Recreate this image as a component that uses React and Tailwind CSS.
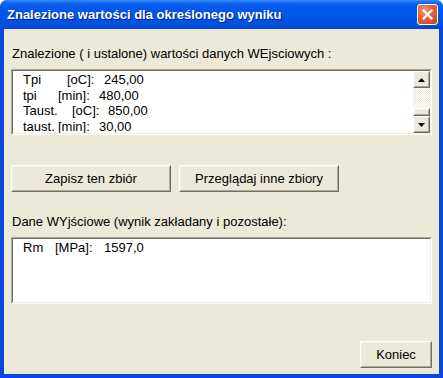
import React from "react";

function Sunken({ className = "", children }) {
  return (
    <div className={"border border-t-[#ACA899] border-l-[#ACA899] border-r-white border-b-white " + className}>
      <div className="h-full border border-t-[#716F64] border-l-[#716F64] border-r-[#F1EFE2] border-b-[#F1EFE2] bg-white flex">
        {children}
      </div>
    </div>
  );
}

function Raised({ className = "", children }) {
  return (
    <div className={"border border-t-white border-l-white border-r-[#716F64] border-b-[#716F64] bg-[#ECE9D8] " + className}>
      <div className="h-full border border-t-[#F1EFE2] border-l-[#F1EFE2] border-r-[#ACA899] border-b-[#ACA899] flex items-center justify-center">
        {children}
      </div>
    </div>
  );
}

function Arrow({ down }) {
  return (
    <svg width="7" height="4" viewBox="0 0 7 4">
      {down ? <polygon points="0,0 7,0 3.5,4" fill="#000" /> : <polygon points="0,4 7,4 3.5,0" fill="#000" />}
    </svg>
  );
}

export default function App() {
  const font = { fontFamily: '"Liberation Sans", Arial, sans-serif' };
  return (
    <div className="w-[443px] h-[378px] flex flex-col bg-[#0A48DD] rounded-t-[7px] overflow-hidden" style={font}>
      {/* Title bar */}
      <div className="h-[29px] shrink-0 flex items-center pl-[7px] pr-[5px] bg-[linear-gradient(to_bottom,#3C8EFD_0px,#1E6FF6_2px,#0A5FEE_4px,#0058E8_10px,#0055E5_18px,#0050DF_24px,#0046D2_29px)]">
        <div className="flex-1 text-white font-bold text-[13px] leading-[15px] [text-shadow:1px_1px_0_#0A1F8C]">
          Znalezione wartości dla określonego wyniku
        </div>
        <div className="w-[21px] h-[21px] rounded-[3px] border border-white bg-[radial-gradient(circle_at_35%_30%,#F09A7C_0%,#E2613F_45%,#C8401D_100%)] flex items-center justify-center">
          <svg width="11" height="11" viewBox="0 0 11 11">
            <path d="M1.5 1.5 L9.5 9.5 M9.5 1.5 L1.5 9.5" stroke="#fff" strokeWidth="2.2" strokeLinecap="square" />
          </svg>
        </div>
      </div>
      {/* Client */}
      <div className="flex-1 mx-[4px] mb-[4px] bg-[#ECE9D8] flex flex-col px-[7px] text-[13px] text-black">
        <div className="mt-[17px] leading-[15px] pl-[1px]">Znalezione ( i ustalone) wartości danych WEjsciowych :</div>
        <Sunken className="mt-[8px] h-[66px]">
          <div className="flex-1 pl-[10px] pt-[1px] leading-[15.5px] whitespace-nowrap overflow-hidden">
            <div className="flex"><span className="w-[44px]">Tpi</span><span className="w-[37px]">[oC]:</span><span>245,00</span></div>
            <div className="flex"><span className="w-[35px]">tpi</span><span className="w-[41px]">[min]:</span><span>480,00</span></div>
            <div className="flex"><span className="w-[49px]">Taust.</span><span className="w-[36px]">[oC]:</span><span>850,00</span></div>
            <div className="flex"><span className="w-[35px]">taust.</span><span className="w-[41px]">[min]:</span><span>30,00</span></div>
          </div>
          <div className="w-[17px] flex flex-col">
            <Raised className="h-[17px] shrink-0"><Arrow /></Raised>
            <div className="flex-1 bg-[repeating-conic-gradient(#ECE9D8_0_25%,#FFFFFF_0_50%)] bg-[length:2px_2px]" />
            <Raised className="h-[8px] shrink-0" />
            <Raised className="h-[17px] shrink-0"><Arrow down /></Raised>
          </div>
        </Sunken>
        <div className="mt-[30px] flex gap-[8px]">
          <Raised className="w-[160px] h-[27px]">Zapisz ten zbiór</Raised>
          <Raised className="w-[160px] h-[27px]">Przeglądaj inne zbiory</Raised>
        </div>
        <div className="mt-[22px] leading-[15px] pl-[1px]">Dane WYjściowe (wynik zakładany i pozostałe):</div>
        <Sunken className="mt-[8px] h-[67px]">
          <div className="flex-1 pl-[10px] pt-[1px] leading-[15.5px] whitespace-nowrap">
            <div className="flex"><span className="w-[32px]">Rm</span><span className="w-[49px]">[MPa]:</span><span>1597,0</span></div>
          </div>
        </Sunken>
        <div className="mt-[37px] flex justify-end">
          <Raised className="w-[72px] h-[27px]">Koniec</Raised>
        </div>
      </div>
    </div>
  );
}
